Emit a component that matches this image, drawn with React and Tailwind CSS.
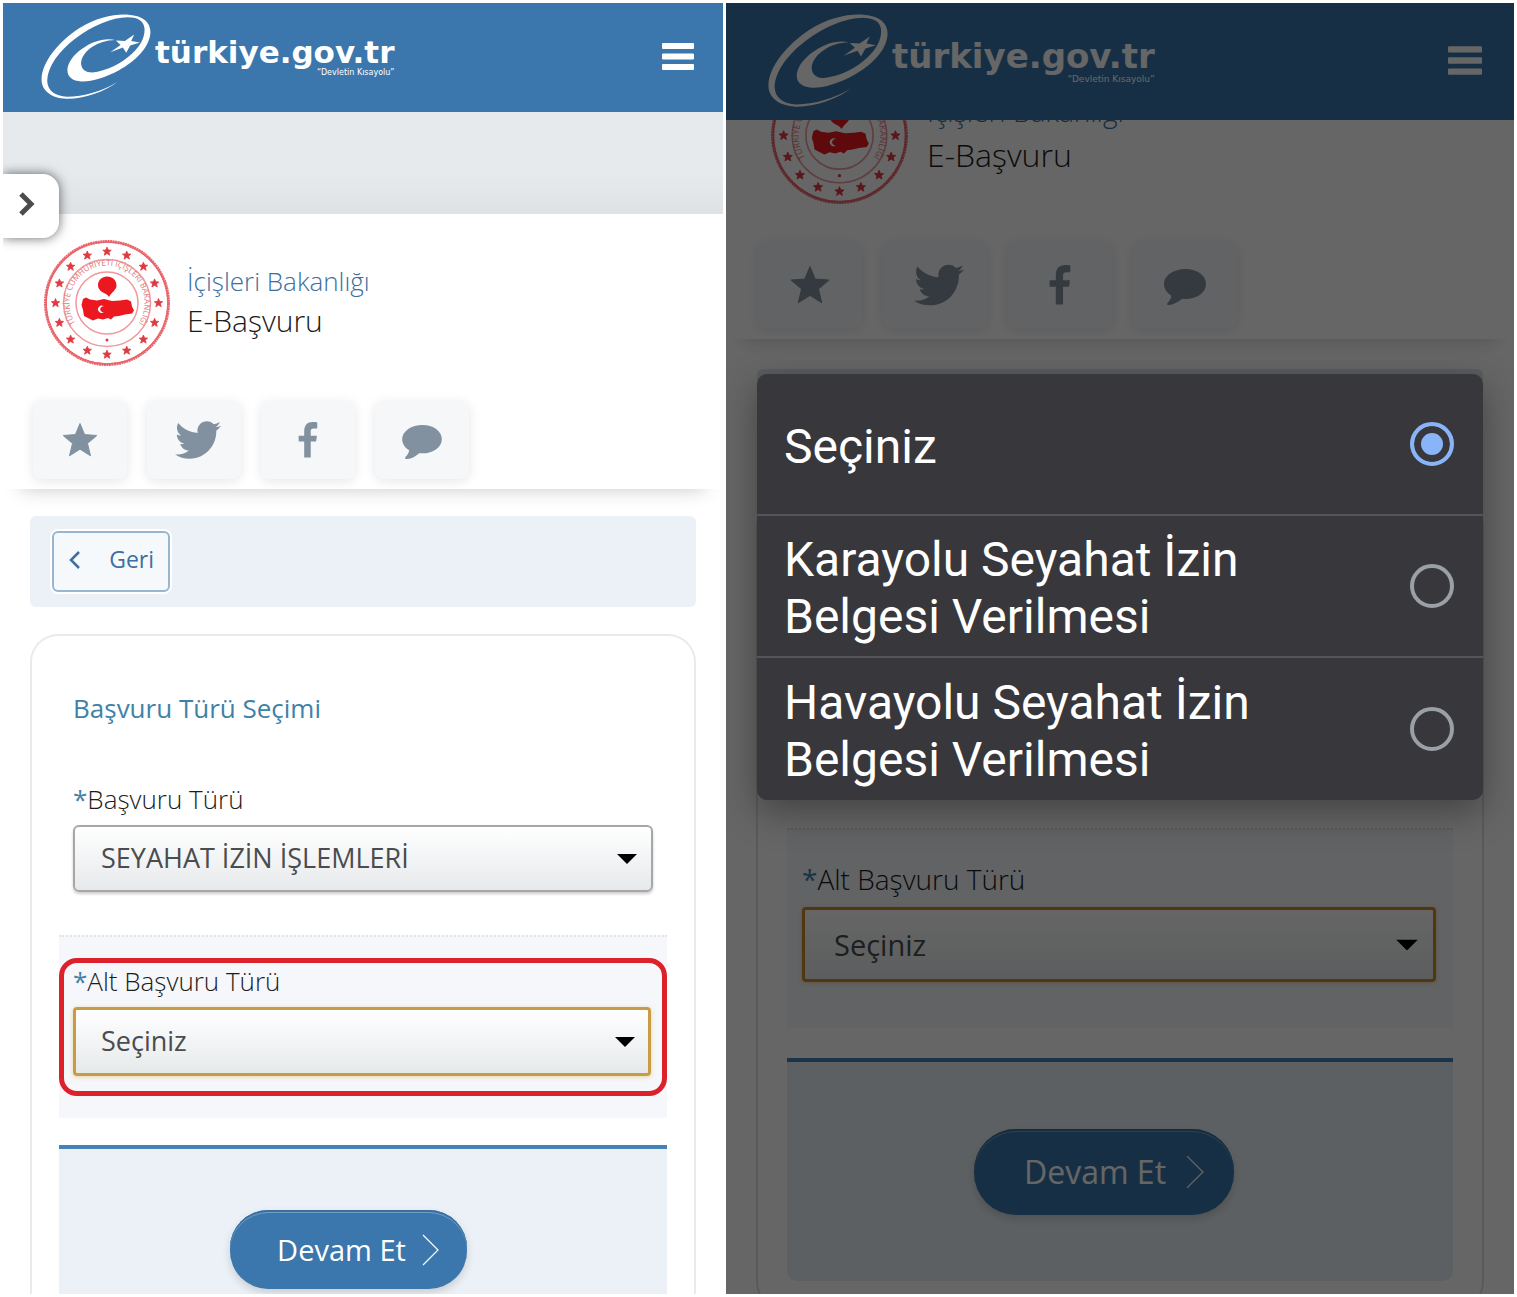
import React, { useState } from 'react';
import { FaTwitter } from 'react-icons/fa';

const options = ['Seçiniz', 'Karayolu Seyahat İzin Belgesi Verilmesi', 'Havayolu Seyahat İzin Belgesi Verilmesi'];

const stars = Array.from({ length: 16 }, (_, i) => (i * 360) / 16);

const StarIcon = ({ className }) => (
  <svg viewBox="0 0 36 36" className={className} fill="currentColor" stroke="currentColor" strokeLinejoin="round">
    <path d="M18 1.5 22.6 12.6 34.8 13.5 25.5 21.4 28.5 33.8 18 27.2 7.5 33.8 10.5 21.4 1.2 13.5 13.4 12.6Z" />
  </svg>
);

const FacebookIcon = ({ className }) => (
  <svg viewBox="0 0 20 37" className={className} fill="currentColor">
    <path d="M19.5.4v6.2h-3.4c-2.7 0-3.3 1.2-3.3 3.2v4.3h6.4l-.9 6h-5.5v16.5H6.1V20.1H.4v-6h5.7V9.2C6.1 3.4 9.3 0 14.7 0c2.5 0 4.3.2 4.8.4z" />
  </svg>
);

const CommentIcon = ({ className }) => (
  <svg viewBox="0 0 42 36" className={className} fill="currentColor">
    <path d="M21.500 0C33 0 42 6.500 42 15S33 30 21.500 30c-1.200 0-2.300-.1-3.400-.2C14.500 33 10 35.500 5.200 36c-1.700.2-2.700-.8-1.700-2 2.100-2.200 3.500-4.500 3.900-7.300C3.100 24 0 19.800 0 15 0 6.500 10 0 21.500 0z" />
  </svg>
);

const Swirl = ({ className }) => (
  <svg viewBox="122 41 330 256" className={className} fill="currentColor">
    <path d="M352 245C310 277 250 297 198 296C150 294 123 270 123 238C124 185 175 125 235 85C290 50 345 40 385 43C430 46 451 66 451 96C449 140 408 182 355 211C315 232 275 245 243 244C215 242 200 229 201 209C203 176 240 143 280 126C305 117 326 115 344 119C318 120 295 127 276 140C255 154 242 173 242 190C243 208 256 217 276 217C318 213 365 190 396 160C422 136 435 110 433 84C431 60 410 51 382 51C335 51 275 77 225 115C175 153 141 200 140 242C141 272 163 288 200 290C250 290 305 274 352 245Z" />
    <path d="M402 103 393 122 419 127 390 136 378 158 368 142 330 156 361 134 347 121 374 122Z" />
  </svg>
);

const Emblem = ({ id, className }) => (
  <svg viewBox="0 0 128 128" className={className} role="img" aria-label="İçişleri Bakanlığı">
    <defs>
      <path id={id} d="M43.500 95.500A37.500 37.500 0 1 1 84.500 95.500" />
    </defs>
    <circle cx="64" cy="64" r="61.500" fill="#fff" stroke="#e9656b" strokeWidth="3" strokeDasharray="2 .5" />
    <circle cx="64" cy="64" r="61" fill="none" stroke="#e9656b" strokeWidth="1.500" />
    <circle cx="64" cy="64" r="43.500" fill="none" stroke="#f0989c" strokeWidth="1.500" />
    <circle cx="64" cy="64" r="31" fill="none" stroke="#f0989c" strokeWidth="1.500" />
    {stars.map((deg) => (
      <path
        key={deg}
        transform={`rotate(${deg} 64 64) translate(64 12.500) rotate(${-deg})`}
        fill="#df3a42"
        stroke="#df3a42"
        strokeWidth=".8"
        d="M0-4.400 1.200-1.500 4.200-1.300 1.900.7 2.700 3.700 0 2 -2.700 3.700 -1.900.7 -4.200-1.300 -1.200-1.500Z"
      />
    ))}
    <text fill="#e0777c" fontSize="8" fontFamily="'Open Sans', sans-serif">
      <textPath href={`#${id}`} startOffset="50%" textAnchor="middle">
        TÜRKİYE CUMHURİYETİ İÇİŞLERİ BAKANLIĞI
      </textPath>
    </text>
    <circle cx="64" cy="101" r="1.500" fill="#df3a42" />
    <path
      fill="#ec1820"
      d="M64 37.500c5.600 0 9.500 3.800 9.500 8.800 0 4-3.200 6.200-5 8.200-1 1-1.800 2-2.500 3.500-1-1.500-2-2.500-4-3.500-4-1.800-7-4.200-7-8.500 0-4.800 4-8.500 9-8.500z"
    />
    <path
      fill="#ec1820"
      d="M40 60l3-1.500 4 2 7 1 7-1.500 8 2 8-.5 7-1 4 2 1 5 2 4-2 3-7 1-6 1.500-5 .5-3 3-3-1.500-5 1.500-5-1-5 2-5-2.500-4-2-1-6-1.500-5z"
    />
    <path fill="#fff" d="M61 67.500a3.600 3.600 0 1 0 0 5.500 2.900 2.900 0 1 1 0-5.500z" />
  </svg>
);

const Caret = ({ className }) => (
  <svg viewBox="0 0 20 10" className={className} aria-hidden="true">
    <path d="M0 0h20L10 10z" fill="#000" />
  </svg>
);

const Header = ({ className, logo, title, motto, burger }) => (
  <header className={`relative z-10 flex shrink-0 items-center justify-between bg-[#3b77ad] pb-[3px] text-white ${className}`}>
    <a href="#" className="flex items-center gap-1">
      <Swirl className={logo} />
      <span className="flex flex-col items-end font-['DejaVu_Sans']">
        <span className={`font-bold ${title}`}>türkiye.gov.tr</span>
        <span className={motto}>“Devletin Kısayolu”</span>
      </span>
    </a>
    <button type="button" aria-label="Menü">
      <svg viewBox="0 0 32 27" className={burger} fill="currentColor">
        <rect width="32" height="6" rx="1" />
        <rect y="10.500" width="32" height="6" rx="1" />
        <rect y="21" width="32" height="6" rx="1" />
      </svg>
    </button>
  </header>
);

const Share = ({ className, button, icons }) => (
  <div className={`flex text-[#82919f] ${className}`}>
    <button type="button" aria-label="Favorilere ekle" className={button}>
      <StarIcon className={icons[0]} />
    </button>
    <button type="button" aria-label="Twitter" className={button}>
      <FaTwitter className={icons[1]} />
    </button>
    <button type="button" aria-label="Facebook" className={button}>
      <FacebookIcon className={icons[2]} />
    </button>
    <button type="button" aria-label="Yorum" className={button}>
      <CommentIcon className={icons[3]} />
    </button>
  </div>
);

const Field = ({ id, label, value, labelClass, selectClass, caretClass }) => (
  <div>
    <label htmlFor={id} className={`block font-light text-[#1c1c1c] ${labelClass}`}>
      <span className="font-normal text-[#3f82a8]">*</span>
      {label}
    </label>
    <div className="relative mt-2">
      <select
        id={id}
        defaultValue={value}
        className={`block w-full appearance-none bg-linear-to-b from-white to-[#e6e9eb] text-[#4a4c4e] ${selectClass}`}
      >
        <option>{value}</option>
      </select>
      <Caret className={`pointer-events-none absolute top-1/2 -translate-y-1/2 ${caretClass}`} />
    </div>
  </div>
);

const ContinueButton = ({ className, arrow }) => (
  <button
    type="button"
    className={`flex items-center justify-center bg-[#3b77ad] text-white shadow-[inset_0_2px_0_#3a6f9f,inset_0_3px_0_#6f9fc9,0_4px_8px_rgba(0,0,0,0.15)] ${className}`}
  >
    Devam Et
    <svg viewBox="0 0 17 32" className={arrow} fill="none" stroke="currentColor" strokeWidth="1.200">
      <path d="M1 1l15 15L1 31" />
    </svg>
  </button>
);

const FormScreen = () => (
  <section className="relative flex flex-col overflow-hidden bg-white">
    <Header
      className="h-[109px] pr-[29px] pl-[38px]"
      logo="h-[85px] w-[110px]"
      title="text-[31px] leading-[34px]"
      motto="text-[8px] leading-[8px]"
      burger="h-[27px] w-8"
    />
    <div className="h-[102px] shrink-0 bg-linear-to-b from-[#e6eaed] from-60% to-[#dfe2e5]" />
    <button
      type="button"
      aria-label="Menüyü aç"
      className="absolute top-[171px] left-0 h-16 w-14 rounded-r-2xl bg-white pb-1 pl-4 shadow-[0_0_12px_rgba(0,0,0,0.6)]"
    >
      <svg viewBox="0 0 16 24" className="h-6 w-4" fill="none" stroke="#4a4c4e" strokeWidth="5">
        <path d="M2 2l10 10L2 22" />
      </svg>
    </button>

    {/* Service title */}
    <div className="shrink-0 bg-white pt-[25px] pb-[10px] pl-[30px] shadow-[0_18px_18px_-18px_rgba(0,0,0,0.22)]">
      <div className="flex items-center gap-4 pl-[10px]">
        <Emblem id="ring-a" className="size-32" />
        <div className="pb-1 text-[26px] leading-[40px] font-light">
          <a href="#" className="block text-[#3b6f9f]">
            İçişleri Bakanlığı
          </a>
          <h1 className="text-[30px] text-[#1c1c1c]">E-Başvuru</h1>
        </div>
      </div>
      <Share
        className="mt-[34px] gap-5"
        button="flex h-[78px] w-[94px] items-center justify-center rounded-lg bg-[#f5f7f9] shadow-[0_2px_12px_rgba(0,0,0,0.1)]"
        icons={['size-9', 'ml-2 size-[46px]', 'h-9 w-5', 'mt-1 h-[34px] w-10']}
      />
    </div>

    <nav className="mx-[27px] mt-[27px] flex h-[91px] shrink-0 items-center rounded-md bg-[#ecf1f8] px-[22px]">
      <button
        type="button"
        className="flex h-[61px] w-[118px] items-center justify-between rounded-md border-2 border-[#98b6ce] bg-[#f5f9fc] px-[14px] pb-1 text-[23px] text-[#3f6f9f] ring-2 ring-white"
      >
        <svg viewBox="0 0 12 18" className="h-[18px] w-3" fill="none" stroke="currentColor" strokeWidth="2.500">
          <path d="M11 1L3 9l8 8" />
        </svg>
        Geri
      </button>
    </nav>

    {/* Application form */}
    <form className="mx-[27px] mt-[27px] shrink-0 rounded-t-[28px] border-2 border-b-0 border-[#e8eaeb] px-[27px] pt-[54px]">
      <div className="px-[14px]">
        <h2 className="mb-[55px] text-[26px] leading-[36px] text-[#3f82a8]">Başvuru Türü Seçimi</h2>
        <Field
          id="tur"
          label="Başvuru Türü"
          value="SEYAHAT İZİN İŞLEMLERİ"
          labelClass="text-[26px] leading-[36px]"
          selectClass="h-[67px] rounded-md border-2 border-[#a5a7a9] pl-[26px] text-[27px] shadow-[0_2px_3px_rgba(0,0,0,0.2)]"
          caretClass="right-4 h-[10px] w-5"
        />
      </div>
      <div className="mt-[43px] border-t-2 border-dotted border-[#e2e4e6] bg-[#f6f7fa] pt-[21px] pb-[22px]">
        <div className="rounded-[18px] border-5 border-[#dd212b] pr-[11px] pb-[15px] pl-[9px]">
          <Field
            id="alt-tur"
            label="Alt Başvuru Türü"
            value="Seçiniz"
            labelClass="text-[26px] leading-[36px]"
            selectClass="h-[69px] rounded-sm border-3 border-[#c79c45] pl-[25px] text-[27px] shadow-[0_1px_4px_rgba(220,180,80,0.5)]"
            caretClass="right-4 h-[10px] w-5"
          />
        </div>
      </div>
      <div className="mt-[27px] flex justify-center border-t-4 border-[#4682b4] bg-[#ecf1f8] pt-[61px] pr-[30px] pb-[61px]">
        <ContinueButton
          className="h-[79px] w-[237px] gap-4 rounded-[38px] pl-5 text-[29px]"
          arrow="h-8 w-[17px]"
        />
      </div>
    </form>
  </section>
);

const PickerScreen = () => {
  const [selected, setSelected] = useState(options[0]);

  return (
    <section className="relative flex flex-col overflow-hidden bg-white">
      <Header
        className="h-[117px] pr-8 pl-[42px]"
        logo="h-[93px] w-[120px]"
        title="text-[34px] leading-[38px]"
        motto="text-[9px] leading-[9px]"
        burger="h-[29px] w-[34px]"
      />
      <div className="-mt-[54px] shrink-0 bg-white pb-[11px] pl-8 shadow-[0_18px_18px_-18px_rgba(0,0,0,0.22)]">
        <div className="flex items-center gap-[18px] pl-3">
          <Emblem id="ring-b" className="size-[139px]" />
          <div className="pb-[6px] text-[28px] leading-[44px] font-light">
            <a href="#" className="block text-[#3b6f9f]">
              İçişleri Bakanlığı
            </a>
            <h1 className="text-[32px] text-[#1c1c1c]">E-Başvuru</h1>
          </div>
        </div>
        <Share
          className="mt-[37px] gap-[21px]"
          button="flex h-[86px] w-[104px] items-center justify-center rounded-lg bg-[#f5f7f9] shadow-[0_2px_12px_rgba(0,0,0,0.1)]"
          icons={['size-10', 'ml-2 size-[50px]', 'h-10 w-[22px]', 'mt-1 h-9 w-[42px]']}
        />
      </div>
      <div className="mx-[31px] mt-[30px] h-[100px] shrink-0 rounded-md bg-[#dfe8ef]" />
      <form className="mx-[30px] mt-[30px] shrink-0 rounded-[28px] border-2 border-[#e0e2e3] px-[29px] pt-[327px] pb-[27px]">
        <div className="border-t-2 border-dotted border-[#dcdee0] bg-[#f6f7fa] pt-[29px] pr-[17px] pb-[46px] pl-[15px]">
          <Field
            id="alt-tur-2"
            label="Alt Başvuru Türü"
            value="Seçiniz"
            labelClass="text-[28px] leading-[40px]"
            selectClass="h-[75px] rounded-sm border-3 border-[#c7892c] pl-[29px] text-[29px] shadow-[0_1px_4px_rgba(220,180,80,0.5)]"
            caretClass="right-[18px] h-[11px] w-[22px]"
          />
        </div>
        <div className="mt-[30px] flex justify-center rounded-b-[10px] border-t-4 border-[#4682b4] bg-[#e8f0f4] pt-[67px] pr-8 pb-[66px]">
          <ContinueButton
            className="h-[86px] w-[260px] gap-5 rounded-[42px] pl-5 text-[32px]"
            arrow="h-[34px] w-[18px]"
          />
        </div>
      </form>

      {/* Option picker */}
      <div className="absolute inset-0 z-20 bg-black/60 px-[31px] pt-[371px]">
        <div
          role="radiogroup"
          className="divide-y-2 divide-[#54555a] overflow-hidden rounded-[10px] bg-[#38373c] shadow-[0_12px_36px_rgba(0,0,0,0.35)]"
        >
          {options.map((option) => (
            <label
              key={option}
              className="flex min-h-[142px] items-center justify-between pr-[29px] pl-[27px] font-[Roboto] text-[48px] leading-[57px] text-white"
            >
              <span className="max-w-[500px] pt-1">{option}</span>
              <input
                type="radio"
                name="alt-tur-secimi"
                checked={selected === option}
                onChange={() => setSelected(option)}
                className="size-11 shrink-0 appearance-none rounded-full border-4 border-[#9aa0a6] checked:border-[#8ab4f8] checked:bg-[#8ab4f8] checked:shadow-[inset_0_0_0_7px_#38373c]"
              />
            </label>
          ))}
        </div>
      </div>
    </section>
  );
};

const App = () => {
  return (
    <main className="grid h-screen grid-cols-[720fr_788fr] gap-[3px] overflow-hidden bg-white p-[3px] font-['Open_Sans',sans-serif]">
      <FormScreen />
      <PickerScreen />
    </main>
  );
};

export default App;
